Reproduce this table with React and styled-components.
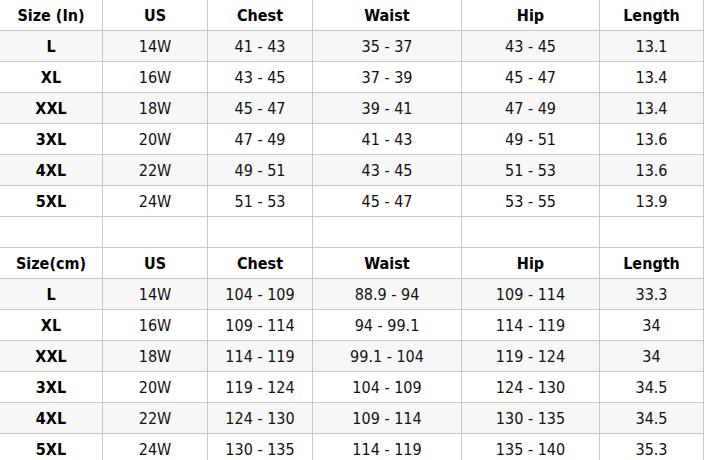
import styled, { createGlobalStyle } from 'styled-components';

const GlobalStyle = createGlobalStyle`
    html, body {
        margin: 0;
        padding: 0;
        background: #ffffff;
    }
    body {
        font-family: "DejaVu Sans Condensed", "DejaVu Sans", "Liberation Sans", sans-serif;
        color: #000;
    }
`

const Table = styled.div`
    display: flex;
    flex-direction: column;
    width: 704px;
`

const Row = styled.div`
    display: grid;
    grid-template-columns: 103px 105px 105px 149px 138px 104px;
    height: 31px;
    background-color: ${p => (p.$striped ? '#f7f7f7' : '#ffffff')};
`

const Cell = styled.div`
    box-sizing: border-box;
    display: flex;
    align-items: center;
    justify-content: center;
    border-right: 1px solid #c8c8c8;
    border-bottom: 1px solid #c8c8c8;
    font-size: 16px;
    font-weight: ${p => (p.$bold ? 700 : 400)};
    color: ${p => (p.$bold ? '#000' : '#111')};
    white-space: nowrap;
`

const inches = {
    head: ['Size (In)', 'US', 'Chest', 'Waist', 'Hip', 'Length'],
    rows: [
        ['L', '14W', '41 - 43', '35 - 37', '43 - 45', '13.1'],
        ['XL', '16W', '43 - 45', '37 - 39', '45 - 47', '13.4'],
        ['XXL', '18W', '45 - 47', '39 - 41', '47 - 49', '13.4'],
        ['3XL', '20W', '47 - 49', '41 - 43', '49 - 51', '13.6'],
        ['4XL', '22W', '49 - 51', '43 - 45', '51 - 53', '13.6'],
        ['5XL', '24W', '51 - 53', '45 - 47', '53 - 55', '13.9'],
    ],
}

const cm = {
    head: ['Size(cm)', 'US', 'Chest', 'Waist', 'Hip', 'Length'],
    rows: [
        ['L', '14W', '104 - 109', '88.9 - 94', '109 - 114', '33.3'],
        ['XL', '16W', '109 - 114', '94 - 99.1', '114 - 119', '34'],
        ['XXL', '18W', '114 - 119', '99.1 - 104', '119 - 124', '34'],
        ['3XL', '20W', '119 - 124', '104 - 109', '124 - 130', '34.5'],
        ['4XL', '22W', '124 - 130', '109 - 114', '130 - 135', '34.5'],
        ['5XL', '24W', '130 - 135', '114 - 119', '135 - 140', '35.3'],
    ],
}

function Section({ data }) {
    return (
        <>
            <Row>
                {data.head.map((h, i) => (
                    <Cell key={i} $bold>{h}</Cell>
                ))}
            </Row>
            {data.rows.map((r, ri) => (
                <Row key={ri} $striped={ri % 2 === 0}>
                    {r.map((c, ci) => (
                        <Cell key={ci} $bold={ci === 0}>{c}</Cell>
                    ))}
                </Row>
            ))}
        </>
    )
}

export default function App() {
    return (
        <>
            <GlobalStyle />
            <Table>
                <Section data={inches} />
                <Row>
                    {[0, 1, 2, 3, 4, 5].map(i => <Cell key={i} />)}
                </Row>
                <Section data={cm} />
            </Table>
        </>
    )
}
